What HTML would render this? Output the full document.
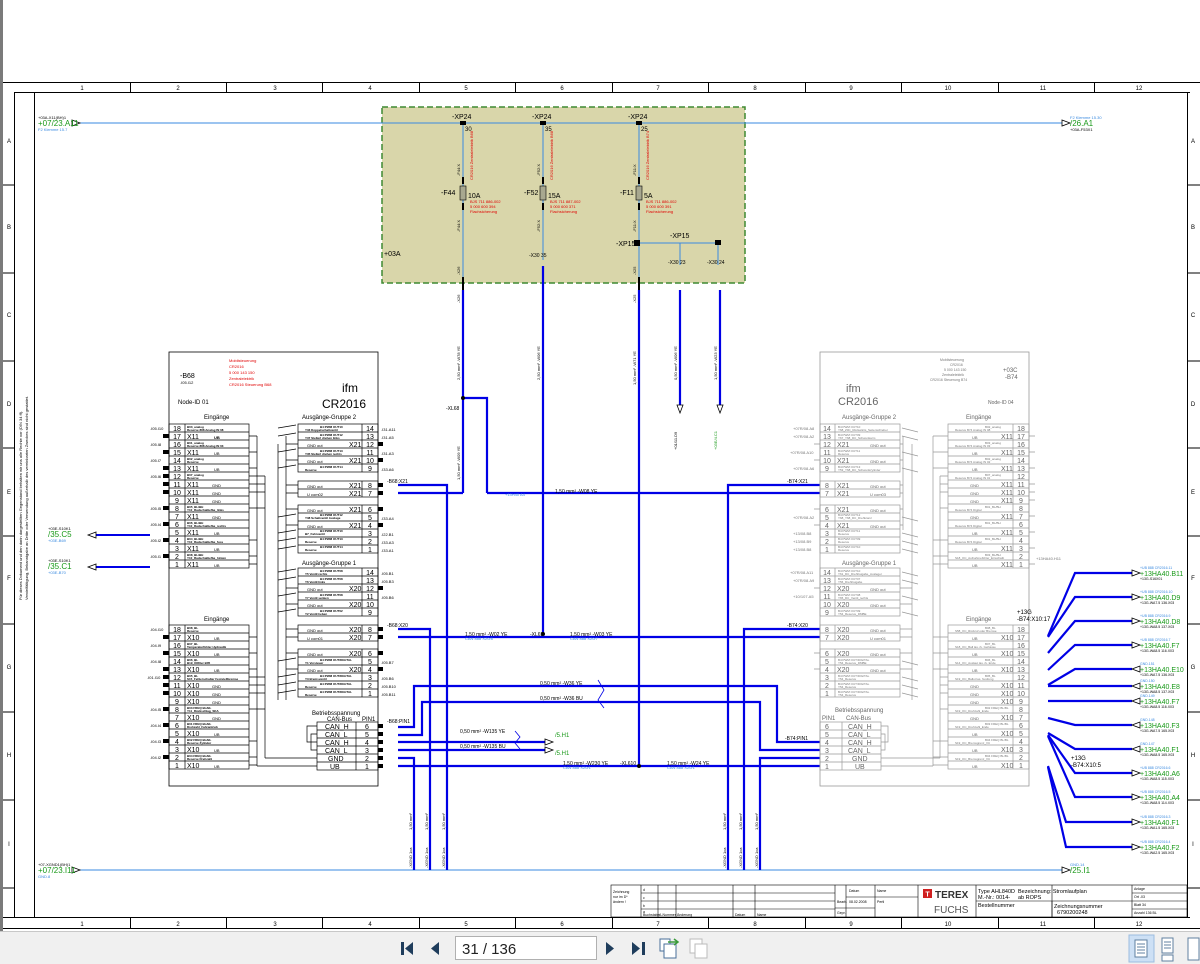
<!DOCTYPE html>
<html><head><meta charset="utf-8">
<style>
html,body{margin:0;padding:0;background:#fff;width:1200px;height:963px;overflow:hidden;font-family:"Liberation Sans",sans-serif}
svg text{font-family:"Liberation Sans",sans-serif}
.k{font-size:7px;fill:#000}
.kg{font-size:7px;fill:#666}
.s{font-size:3px;fill:#000;font-weight:bold}
.sg{font-size:3px;fill:#777}
.r{font-size:4px;fill:#e00000}
.gl{font-size:8px;fill:#1a9a1a}
.bl{font-size:4px;fill:#3a8ae0}
.tiny{font-size:4px;fill:#000}
.tb{position:absolute;left:0;top:931px;width:1200px;height:32px;background:#f0f0f0;border-top:1px solid #c8c8c8}
</style></head><body>
<div style="position:absolute;left:0;top:0;width:3px;height:931px;background:#7a7a7a"></div>
<svg width="1200" height="931" viewBox="0 0 1200 931" style="position:absolute;left:0;top:0">
<!-- frame -->
<g stroke="#000" fill="none" stroke-width="1">
<line x1="3" y1="82.5" x2="1200" y2="82.5"/>
<line x1="14" y1="92.5" x2="1190" y2="92.5"/>
<line x1="14.5" y1="92" x2="14.5" y2="917"/>
<line x1="34.5" y1="92" x2="34.5" y2="917"/>
<line x1="1187.5" y1="92" x2="1187.5" y2="917"/>
<line x1="3" y1="917.5" x2="1190" y2="917.5"/>
<line x1="3" y1="928.5" x2="1200" y2="928.5"/>
<line x1="3" y1="185" x2="14" y2="185"/><line x1="3" y1="273" x2="14" y2="273"/><line x1="3" y1="361" x2="14" y2="361"/><line x1="3" y1="448" x2="14" y2="448"/><line x1="3" y1="536" x2="14" y2="536"/><line x1="3" y1="624" x2="14" y2="624"/><line x1="3" y1="712" x2="14" y2="712"/><line x1="3" y1="800" x2="14" y2="800"/><line x1="3" y1="888" x2="14" y2="888"/>
<line x1="1187" y1="185" x2="1200" y2="185"/><line x1="1187" y1="273" x2="1200" y2="273"/><line x1="1187" y1="361" x2="1200" y2="361"/><line x1="1187" y1="448" x2="1200" y2="448"/><line x1="1187" y1="536" x2="1200" y2="536"/><line x1="1187" y1="624" x2="1200" y2="624"/><line x1="1187" y1="712" x2="1200" y2="712"/><line x1="1187" y1="800" x2="1200" y2="800"/><line x1="1187" y1="888" x2="1200" y2="888"/>
<line x1="130.5" y1="82" x2="130.5" y2="92"/><line x1="226.5" y1="82" x2="226.5" y2="92"/><line x1="322.5" y1="82" x2="322.5" y2="92"/><line x1="419.5" y1="82" x2="419.5" y2="92"/><line x1="515.5" y1="82" x2="515.5" y2="92"/><line x1="612.5" y1="82" x2="612.5" y2="92"/><line x1="708.5" y1="82" x2="708.5" y2="92"/><line x1="805.5" y1="82" x2="805.5" y2="92"/><line x1="901.5" y1="82" x2="901.5" y2="92"/><line x1="998.5" y1="82" x2="998.5" y2="92"/><line x1="1094.5" y1="82" x2="1094.5" y2="92"/>
<line x1="130.5" y1="917" x2="130.5" y2="928"/><line x1="226.5" y1="917" x2="226.5" y2="928"/><line x1="322.5" y1="917" x2="322.5" y2="928"/><line x1="419.5" y1="917" x2="419.5" y2="928"/><line x1="515.5" y1="917" x2="515.5" y2="928"/><line x1="612.5" y1="917" x2="612.5" y2="928"/><line x1="708.5" y1="917" x2="708.5" y2="928"/><line x1="805.5" y1="917" x2="805.5" y2="928"/><line x1="901.5" y1="917" x2="901.5" y2="928"/><line x1="998.5" y1="917" x2="998.5" y2="928"/><line x1="1094.5" y1="917" x2="1094.5" y2="928"/>
</g>
<g class="k" text-anchor="middle" style="font-size:6px">
<text x="82" y="90">1</text><text x="178" y="90">2</text><text x="275" y="90">3</text><text x="370" y="90">4</text><text x="466" y="90">5</text><text x="562" y="90">6</text><text x="658" y="90">7</text><text x="755" y="90">8</text><text x="851" y="90">9</text><text x="948" y="90">10</text><text x="1043" y="90">11</text><text x="1139" y="90">12</text>
<text x="82" y="926">1</text><text x="178" y="926">2</text><text x="275" y="926">3</text><text x="370" y="926">4</text><text x="466" y="926">5</text><text x="562" y="926">6</text><text x="658" y="926">7</text><text x="755" y="926">8</text><text x="851" y="926">9</text><text x="948" y="926">10</text><text x="1043" y="926">11</text><text x="1139" y="926">12</text>
<text x="9" y="143">A</text><text x="9" y="229">B</text><text x="9" y="317">C</text><text x="9" y="406">D</text><text x="9" y="494">E</text><text x="9" y="580">F</text><text x="9" y="669">G</text><text x="9" y="757">H</text><text x="9" y="846">I</text>
<text x="1193" y="143">A</text><text x="1193" y="229">B</text><text x="1193" y="317">C</text><text x="1193" y="406">D</text><text x="1193" y="494">E</text><text x="1193" y="580">F</text><text x="1193" y="669">G</text><text x="1193" y="757">H</text><text x="1193" y="846">I</text>
</g>
<text transform="translate(22,600) rotate(-90)" class="tiny">Für dieses Dokument und den darin dargestellten Gegenstand behalten wir uns alle Rechte vor (DIN 34 ff).</text>
<text transform="translate(28,600) rotate(-90)" class="tiny">Vervielfältigung, Bekanntgabe an Dritte oder Verwendung außerhalb des vereinbarten Zweckes sind nicht gestattet.</text>

<!-- tan box -->
<rect x="382" y="107" width="363" height="176" fill="#d9d6aa" stroke="#3f8a32" stroke-width="1.5" stroke-dasharray="6,3"/>
<text x="384" y="256" class="k">+03A</text>

<!-- thin blue lines -->
<g stroke="#3a8ae0" stroke-width="1" fill="none">
<line x1="80" y1="123" x2="1062" y2="123"/>
<line x1="80" y1="870" x2="1062" y2="870"/>
<line x1="463" y1="123" x2="463" y2="283"/>
<line x1="543" y1="123" x2="543" y2="260"/>
<line x1="639" y1="123" x2="639" y2="283"/>
<polyline points="639,243 718,243 718,265"/>
<line x1="680" y1="243" x2="680" y2="265"/>
</g>
<g stroke="#000" fill="#fff" stroke-width="0.8">
<path d="M72,120 L80,123 L72,126 Z"/><path d="M1062,120 L1070,123 L1062,126 Z"/>
<path d="M72,867 L80,870 L72,873 Z"/><path d="M1062,867 L1070,870 L1062,873 Z"/>
</g>
<text x="38" y="119" class="tiny">+03A-X11(BH)1</text>
<text x="38" y="126" class="gl">+07/23.A11</text>
<text x="38" y="131" class="bl">F2 Klemme 15.7</text>
<text x="1070" y="119" class="bl">F2 Klemme 15.30</text>
<text x="1070" y="126" class="gl">/26.A1</text>
<text x="1070" y="131" class="tiny">+03A-F53X1</text>
<text x="38" y="866" class="tiny">+07-XGND1(BH)1</text>
<text x="38" y="873" class="gl">+07/23.I11</text>
<text x="38" y="878" class="bl">GND.8</text>
<text x="1070" y="866" class="bl">GND.14</text>
<text x="1070" y="873" class="gl">/25.I1</text>

<!-- fuses -->
<g fill="#000">
<rect x="460" y="121" width="6" height="4"/><rect x="540" y="121" width="6" height="4"/><rect x="636" y="121" width="6" height="4"/>
<rect x="634" y="240" width="6" height="6"/><rect x="715" y="240" width="6" height="5"/>
</g>
<g class="k">
<text x="452" y="119">-XP24</text><text x="532" y="119">-XP24</text><text x="628" y="119">-XP24</text>
<text x="465" y="131" style="font-size:6px">30</text><text x="545" y="131" style="font-size:6px">35</text><text x="641" y="131" style="font-size:6px">25</text>
<text x="441" y="195">-F44</text><text x="524" y="195">-F52</text><text x="620" y="195">-F11</text>
<text x="468" y="198">10A</text><text x="548" y="198">15A</text><text x="644" y="198">5A</text>
<text x="616" y="246">-XP15</text><text x="670" y="238">-XP15</text>
<text x="668" y="264" style="font-size:5px">-X30 23</text><text x="707" y="264" style="font-size:5px">-X30 24</text>
<text x="529" y="257" style="font-size:5px">-X30 35</text>
</g>
<g fill="#a8a890" stroke="#000" stroke-width="0.6">
<rect x="460" y="186" width="6" height="14"/><rect x="540" y="186" width="6" height="14"/><rect x="636" y="186" width="6" height="14"/>
</g>
<g stroke="#000" stroke-width="2"><line x1="463" y1="177" x2="463" y2="184"/><line x1="463" y1="203" x2="463" y2="210"/><line x1="543" y1="177" x2="543" y2="184"/><line x1="543" y1="203" x2="543" y2="210"/><line x1="639" y1="177" x2="639" y2="184"/><line x1="639" y1="203" x2="639" y2="210"/><line x1="463" y1="277" x2="463" y2="290"/><line x1="639" y1="277" x2="639" y2="290"/></g>
<g class="r">
<text x="470" y="203">BJS 711 886-002</text><text x="470" y="208">5 000 600 394</text><text x="470" y="213">Flachsicherung</text>
<text x="550" y="203">BJS 711 887-002</text><text x="550" y="208">5 000 600 371</text><text x="550" y="213">Flachsicherung</text>
<text x="646" y="203">BJS 711 886-002</text><text x="646" y="208">5 000 600 391</text><text x="646" y="213">Flachsicherung</text>
<text transform="translate(473,180) rotate(-90)">CR2016 Zentralelektrik B68</text>
<text transform="translate(553,180) rotate(-90)">CR2016 Zentralelektrik B68</text>
<text transform="translate(649,180) rotate(-90)">CR2016 Zentralelektrik B74</text>
</g>
<g class="tiny">
<text transform="translate(460,176) rotate(-90)">-F44:X</text><text transform="translate(540,176) rotate(-90)">-F52:X</text><text transform="translate(636,176) rotate(-90)">-F11:X</text>
<text transform="translate(460,232) rotate(-90)">-F44:X</text><text transform="translate(540,232) rotate(-90)">-F52:X</text><text transform="translate(636,232) rotate(-90)">-F11:X</text>
<text transform="translate(460,275) rotate(-90)">-X26</text><text transform="translate(636,275) rotate(-90)">-X25</text>
<text transform="translate(460,303) rotate(-90)">-X26</text><text transform="translate(636,303) rotate(-90)">-X25</text>
</g>

<!-- thick blue wires -->
<g stroke="#0000e6" stroke-width="2.2" fill="none">
<line x1="463" y1="290" x2="463" y2="493"/>
<polyline points="463,398 487,398 487,493"/>
<line x1="398" y1="493" x2="463" y2="493"/>
<line x1="487" y1="493" x2="820" y2="493"/>
<polyline points="398,485 447,485 447,870"/>
<polyline points="820,485 728,485 728,870"/>
<line x1="543" y1="266" x2="543" y2="634"/>
<line x1="639" y1="290" x2="639" y2="766"/>
<line x1="680" y1="290" x2="680" y2="405"/>
<line x1="720" y1="290" x2="720" y2="405"/>
<polyline points="398,629 430,629 430,870"/>
<line x1="398" y1="637" x2="820" y2="637"/>
<polyline points="820,629 744,629 744,870"/>
<polyline points="398,727 414,727 414,686 777,686 777,742 820,742"/>
<polyline points="398,735 422,735 422,702 760,702 760,750 820,750"/>
<line x1="398" y1="742" x2="545" y2="742"/>
<line x1="398" y1="750" x2="545" y2="750"/>
<polyline points="398,758 414,758 414,870"/>
<line x1="398" y1="766" x2="820" y2="766"/>
<polyline points="820,758 760,758 760,870"/>
</g>
<g fill="#000"><circle cx="463" cy="398" r="2"/><circle cx="543" cy="634" r="2"/><circle cx="639" cy="766" r="2"/></g>
<g stroke="#000" fill="#fff" stroke-width="0.8">
<path d="M677,405 L683,405 L680,413 Z"/><path d="M717,405 L723,405 L720,413 Z"/>
<path d="M545,739 L553,742 L545,745 Z"/><path d="M545,747 L553,750 L545,753 Z"/>
</g>
<g class="k" style="font-size:5px">
<text x="446" y="410">-XL68</text><text x="530" y="636">-XL69</text><text x="620" y="765">-XL610</text>
<text x="555" y="493">1,50 mm²  -W08 YE</text><text x="465" y="636">1,50 mm²  -W02 YE</text><text x="570" y="636">1,50 mm²  -W03 YE</text>
<text x="540" y="685">0,50 mm²  -W36 YE</text><text x="540" y="700">0,50 mm²  -W36 BU</text>
<text x="460" y="733">0,50 mm²  -W135 YE</text><text x="460" y="748">0,50 mm²  -W135 BU</text>
<text x="563" y="765">1,50 mm²  -W230 YE</text><text x="667" y="765">1,50 mm²  -W24 YE</text>
<text x="387" y="483">-B68:X21</text><text x="387" y="627">-B68:X20</text><text x="387" y="723">-B68:PIN1</text>
<text x="787" y="483">-B74:X21</text><text x="787" y="627">-B74:X20</text><text x="785" y="740">-B74:PIN1</text>
</g>
<g class="gl" style="font-size:6px"><text x="555" y="737">/5.H1</text><text x="555" y="755">/5.H1</text></g>
<g class="bl"><text x="505" y="496">+13H40 A4</text><text x="465" y="640">CAN 888 X20/8</text><text x="570" y="640">CAN 888 X20/7</text><text x="563" y="769">CAN 888 X20/1</text><text x="667" y="769">CAN 888 X20/1</text></g>
<polyline points="515,731 520,737 515,743 520,749" stroke="#0000e6" fill="none" stroke-width="0.8"/>
<polyline points="598,680 604,690 598,700 604,708" stroke="#0000e6" fill="none" stroke-width="0.8"/>
<g class="tiny">
<text transform="translate(460,380) rotate(-90)">2,50 mm²  -W78 YE</text>
<text transform="translate(540,380) rotate(-90)">2,50 mm²  -W06 YE</text>
<text transform="translate(636,385) rotate(-90)">1,50 mm²  -W71 YE</text>
<text transform="translate(460,480) rotate(-90)">1,50 mm²  -W09 YE</text>
<text transform="translate(677,380) rotate(-90)">0,50 mm² -W06 YE</text>
<text transform="translate(717,380) rotate(-90)">1,50 mm² -W23 YE</text>
<text transform="translate(412,830) rotate(-90)">1,50 mm²</text><text transform="translate(428,830) rotate(-90)">1,50 mm²</text><text transform="translate(445,830) rotate(-90)">1,50 mm²</text>
<text transform="translate(726,830) rotate(-90)">1,50 mm²</text><text transform="translate(742,830) rotate(-90)">1,50 mm²</text><text transform="translate(758,830) rotate(-90)">1,50 mm²</text>
<text transform="translate(412,868) rotate(-90)">-XGND 1ca</text><text transform="translate(428,868) rotate(-90)">-XGND 1ca</text><text transform="translate(445,868) rotate(-90)">-XGND 1ca</text>
<text transform="translate(726,868) rotate(-90)">-XGND 1ca</text><text transform="translate(742,868) rotate(-90)">-XGND 1ca</text><text transform="translate(758,868) rotate(-90)">-XGND 1ca</text>
<text transform="translate(677,450) rotate(-90)">+01/11.D9</text><text transform="translate(717,450) rotate(-90)" style="fill:#1a9a1a">+03E/4.C1</text>
</g>

<!-- LEFT MODULE B68 -->
<rect x="169" y="352" width="209" height="434" fill="none" stroke="#000" stroke-width="0.8"/>
<text x="180" y="378" class="k">-B68</text><text x="180" y="384" class="tiny">.I05.I12</text>
<text x="178" y="404" class="k" style="font-size:6px">Node-ID 01</text>
<text x="342" y="392" class="k" style="font-size:12px">ifm</text>
<text x="322" y="408" class="k" style="font-size:12px">CR2016</text>
<g class="r"><text x="229" y="362">Mobilsteuerung</text><text x="229" y="368">CR2016</text><text x="229" y="374">5 000 143 150</text><text x="229" y="380">Zentralelektrik</text><text x="229" y="386">CR2016 Steuerung B68</text></g>
<text x="204" y="419" class="k" style="font-size:6px">Eingänge</text>
<text x="302" y="419" class="k" style="font-size:6px">Ausgänge-Gruppe 2</text>
<text x="302" y="565" class="k" style="font-size:6px">Ausgänge-Gruppe 1</text>
<text x="204" y="621" class="k" style="font-size:6px">Eingänge</text>
<text x="312" y="715" class="k" style="font-size:6px">Betriebsspannung</text>
<text x="327" y="721" class="k" style="font-size:6px">CAN-Bus</text><text x="362" y="721" class="k" style="font-size:6px">PIN1</text>

<g fill="none" stroke="#000" stroke-width="0.7">
<!-- left upper table rows -->
<rect x="169" y="424" width="80" height="144"/><line x1="185" y1="424" x2="185" y2="568"/>
<path d="M169,432H249M169,440H249M169,448H249M169,456H249M169,464H249M169,472H249M169,480H249M169,488H249M169,496H249M169,504H249M169,512H249M169,520H249M169,528H249M169,536H249M169,544H249M169,552H249M169,560H249"/>
<rect x="169" y="625" width="80" height="144"/><line x1="185" y1="625" x2="185" y2="769"/>
<path d="M169,633H249M169,641H249M169,649H249M169,657H249M169,665H249M169,673H249M169,681H249M169,689H249M169,697H249M169,705H249M169,713H249M169,721H249M169,729H249M169,737H249M169,745H249M169,753H249M169,761H249"/>
<!-- right tables -->
<rect x="298" y="424" width="80" height="48"/><line x1="362" y1="424" x2="362" y2="472"/><path d="M298,432H378M298,440H378M298,448H378M298,456H378M298,464H378"/>
<rect x="298" y="481" width="80" height="16"/><line x1="362" y1="481" x2="362" y2="497"/><path d="M298,489H378"/>
<rect x="298" y="505" width="80" height="48"/><line x1="362" y1="505" x2="362" y2="553"/><path d="M298,513H378M298,521H378M298,529H378M298,537H378M298,545H378"/>
<rect x="298" y="568" width="80" height="48"/><line x1="362" y1="568" x2="362" y2="616"/><path d="M298,576H378M298,584H378M298,592H378M298,600H378M298,608H378"/>
<rect x="298" y="625" width="80" height="16"/><line x1="362" y1="625" x2="362" y2="641"/><path d="M298,633H378"/>
<rect x="298" y="649" width="80" height="48"/><line x1="362" y1="649" x2="362" y2="697"/><path d="M298,657H378M298,665H378M298,673H378M298,681H378M298,689H378"/>
<rect x="317" y="722" width="61" height="48"/><line x1="356" y1="722" x2="356" y2="770"/><path d="M317,730H378M317,738H378M317,746H378M317,754H378M317,762H378"/>
<polyline points="317,726 307,726 307,742 317,742"/><polyline points="317,734 311,734 311,750 317,750"/>
<!-- buses -->
<line x1="257" y1="436" x2="257" y2="766"/><line x1="265" y1="476" x2="265" y2="758"/>
<path d="M249,436H257M249,452H257M249,468H257M249,540H257M249,556H257M249,564H257M249,637H257M249,653H257M249,669H257M249,741H257M249,757H257M249,765H257"/>
<path d="M249,476H265M249,484H265M249,492H265M249,508H265M249,677H265M249,685H265M249,693H265M249,709H265"/>
<line x1="257" y1="766" x2="317" y2="766"/><line x1="265" y1="758" x2="317" y2="758"/>
<line x1="286" y1="436" x2="286" y2="700"/><line x1="278" y1="444" x2="278" y2="700"/>
<path d="M286,444H298M286,460H298M286,485H298M286,493H298M286,509H298M286,525H298M286,588H298M286,604H298M286,629H298M286,637H298M286,653H298M286,669H298"/>
<path d="M278,428L296,425M278,436L296,433M278,452L296,449M278,468L296,465M278,517L296,514M278,533L296,530M278,541L296,538M278,549L296,546M278,572L296,569M278,580L296,577M278,596L296,593M278,612L296,609M278,661L296,658M278,677L296,674M278,685L296,682M278,693L296,690"/>
</g>
<g fill="#000">
<rect x="163" y="434" width="6" height="4"/><rect x="163" y="450" width="6" height="4"/><rect x="163" y="466" width="6" height="4"/><rect x="163" y="474" width="6" height="4"/><rect x="163" y="482" width="6" height="4"/><rect x="163" y="490" width="6" height="4"/><rect x="163" y="506" width="6" height="4"/><rect x="163" y="522" width="6" height="4"/><rect x="163" y="538" width="6" height="4"/><rect x="163" y="554" width="6" height="4"/>
<rect x="163" y="635" width="6" height="4"/><rect x="163" y="651" width="6" height="4"/><rect x="163" y="667" width="6" height="4"/><rect x="163" y="675" width="6" height="4"/><rect x="163" y="683" width="6" height="4"/><rect x="163" y="691" width="6" height="4"/><rect x="163" y="707" width="6" height="4"/><rect x="163" y="723" width="6" height="4"/><rect x="163" y="739" width="6" height="4"/><rect x="163" y="755" width="6" height="4"/>
<rect x="378" y="442" width="5" height="4"/><rect x="378" y="458" width="5" height="4"/><rect x="378" y="483" width="5" height="4"/><rect x="378" y="491" width="5" height="4"/><rect x="378" y="507" width="5" height="4"/><rect x="378" y="523" width="5" height="4"/><rect x="378" y="586" width="5" height="4"/><rect x="378" y="627" width="5" height="4"/><rect x="378" y="635" width="5" height="4"/><rect x="378" y="651" width="5" height="4"/><rect x="378" y="667" width="5" height="4"/>
<rect x="378" y="724" width="5" height="4"/><rect x="378" y="732" width="5" height="4"/><rect x="378" y="740" width="5" height="4"/><rect x="378" y="748" width="5" height="4"/><rect x="378" y="756" width="5" height="4"/><rect x="378" y="764" width="5" height="4"/>
</g>
<!-- left numbers -->
<g class="k" text-anchor="middle">
<text x="177" y="431">18</text><text x="177" y="439">17</text><text x="177" y="447">16</text><text x="177" y="455">15</text><text x="177" y="463">14</text><text x="177" y="471">13</text><text x="177" y="479">12</text><text x="177" y="487">11</text><text x="177" y="495">10</text><text x="177" y="503">9</text><text x="177" y="511">8</text><text x="177" y="519">7</text><text x="177" y="527">6</text><text x="177" y="535">5</text><text x="177" y="543">4</text><text x="177" y="551">3</text><text x="177" y="559">2</text><text x="177" y="567">1</text>
<text x="177" y="632">18</text><text x="177" y="640">17</text><text x="177" y="648">16</text><text x="177" y="656">15</text><text x="177" y="664">14</text><text x="177" y="672">13</text><text x="177" y="680">12</text><text x="177" y="688">11</text><text x="177" y="696">10</text><text x="177" y="704">9</text><text x="177" y="712">8</text><text x="177" y="720">7</text><text x="177" y="728">6</text><text x="177" y="736">5</text><text x="177" y="744">4</text><text x="177" y="752">3</text><text x="177" y="760">2</text><text x="177" y="768">1</text>
<text x="370" y="431">14</text><text x="370" y="439">13</text><text x="370" y="447">12</text><text x="370" y="455">11</text><text x="370" y="463">10</text><text x="370" y="471">9</text><text x="370" y="488">8</text><text x="370" y="496">7</text><text x="370" y="512">6</text><text x="370" y="520">5</text><text x="370" y="528">4</text><text x="370" y="536">3</text><text x="370" y="544">2</text><text x="370" y="552">1</text>
<text x="370" y="575">14</text><text x="370" y="583">13</text><text x="370" y="591">12</text><text x="370" y="599">11</text><text x="370" y="607">10</text><text x="370" y="615">9</text><text x="370" y="632">8</text><text x="370" y="640">7</text><text x="370" y="656">6</text><text x="370" y="664">5</text><text x="370" y="672">4</text><text x="370" y="680">3</text><text x="370" y="688">2</text><text x="370" y="696">1</text>
<text x="367" y="729">6</text><text x="367" y="737">5</text><text x="367" y="745">4</text><text x="367" y="753">3</text><text x="367" y="761">2</text><text x="367" y="769">1</text>
</g>
<g class="k">
<text x="187" y="439">X11</text><text x="214" y="439" class="s" style="font-size:4px">UB</text>
<text x="187" y="455">X11</text><text x="214" y="455" style="font-size:4px">UB</text>
<text x="187" y="471">X11</text><text x="214" y="471" style="font-size:4px">UB</text>
<text x="187" y="487">X11</text><text x="212" y="487" style="font-size:4px">GND</text>
<text x="187" y="495">X11</text><text x="212" y="495" style="font-size:4px">GND</text>
<text x="187" y="503">X11</text><text x="212" y="503" style="font-size:4px">GND</text>
<text x="187" y="519">X11</text><text x="212" y="519" style="font-size:4px">GND</text>
<text x="187" y="535">X11</text><text x="214" y="535" style="font-size:4px">UB</text>
<text x="187" y="551">X11</text><text x="214" y="551" style="font-size:4px">UB</text>
<text x="187" y="567">X11</text><text x="214" y="567" style="font-size:4px">UB</text>
<text x="187" y="640">X10</text><text x="214" y="640" style="font-size:4px">UB</text>
<text x="187" y="656">X10</text><text x="214" y="656" style="font-size:4px">UB</text>
<text x="187" y="672">X10</text><text x="214" y="672" style="font-size:4px">UB</text>
<text x="187" y="688">X10</text><text x="212" y="688" style="font-size:4px">GND</text>
<text x="187" y="696">X10</text><text x="212" y="696" style="font-size:4px">GND</text>
<text x="187" y="704">X10</text><text x="212" y="704" style="font-size:4px">GND</text>
<text x="187" y="720">X10</text><text x="212" y="720" style="font-size:4px">GND</text>
<text x="187" y="736">X10</text><text x="214" y="736" style="font-size:4px">UB</text>
<text x="187" y="752">X10</text><text x="214" y="752" style="font-size:4px">UB</text>
<text x="187" y="768">X10</text><text x="214" y="768" style="font-size:4px">UB</text>
<text x="349" y="447">X21</text><text x="307" y="447" style="font-size:4px">GND out</text>
<text x="349" y="463">X21</text><text x="307" y="463" style="font-size:4px">GND out</text>
<text x="349" y="488">X21</text><text x="307" y="488" style="font-size:4px">GND out</text>
<text x="349" y="496">X21</text><text x="307" y="496" style="font-size:4px">U com02</text>
<text x="349" y="512">X21</text><text x="307" y="512" style="font-size:4px">GND out</text>
<text x="349" y="528">X21</text><text x="307" y="528" style="font-size:4px">GND out</text>
<text x="349" y="591">X20</text><text x="307" y="591" style="font-size:4px">GND out</text>
<text x="349" y="607">X20</text><text x="307" y="607" style="font-size:4px">GND out</text>
<text x="349" y="632">X20</text><text x="307" y="632" style="font-size:4px">GND out</text>
<text x="349" y="640">X20</text><text x="307" y="640" style="font-size:4px">U com01</text>
<text x="349" y="656">X20</text><text x="307" y="656" style="font-size:4px">GND out</text>
<text x="349" y="672">X20</text><text x="307" y="672" style="font-size:4px">GND out</text>
<text x="325" y="729">CAN_H</text><text x="325" y="737">CAN_L</text><text x="325" y="745">CAN_H</text><text x="325" y="753">CAN_L</text><text x="328" y="761">GND</text><text x="330" y="769">UB</text>
</g>
<g class="s">
<text x="187" y="428">B03_analog</text><text x="187" y="431">Reserve 888 Analog IN 08</text>
<text x="187" y="444">B01_analog</text><text x="187" y="447">Reserve 888 Analog IN 03</text>
<text x="187" y="460">B02_analog</text><text x="187" y="463">Reserve</text>
<text x="187" y="476">B07_analog</text><text x="187" y="479">Reserve</text>
<text x="187" y="508">B05_BL/BH</text><text x="187" y="511">Y10_Radschaltiefbe_links</text>
<text x="187" y="524">B06_BL/BH</text><text x="187" y="527">Y10_Radschaltiefbe_rechts</text>
<text x="187" y="540">B04_BL/BH</text><text x="187" y="543">Y10_Radschaltiefbe_fuss</text>
<text x="187" y="556">B08_BL/BH</text><text x="187" y="559">Y10_Radschaltiefbe_hinten</text>
<text x="187" y="629">B08_BL</text><text x="187" y="632">Reserve</text>
<text x="187" y="645">B07_BL</text><text x="187" y="648">Temperaturfühler Hydraulik</text>
<text x="187" y="661">B06_BL</text><text x="187" y="664">B19_Ölfilter B05</text>
<text x="187" y="677">B05_BL</text><text x="187" y="680">S15_Fehlerschalter Feststellbremse</text>
<text x="187" y="709">B03 FREQ BL/BL</text><text x="187" y="712">Y11_Rückschlag_SKA</text>
<text x="187" y="725">B01 FREQ BL/BL</text><text x="187" y="728">Drehzahl_Fahrantrieb</text>
<text x="187" y="741">B02 FREQ BL/BL</text><text x="187" y="744">Reserve Zylinder</text>
<text x="187" y="757">B04 FREQ BL/BL</text><text x="187" y="760">Reserve Drehzahl</text>
<text x="320" y="428">B4:PWM OUT10</text><text x="305" y="431">Y33 Doppelschaltventil</text>
<text x="320" y="436">B4:PWM OUT12</text><text x="305" y="439">Y37 Stellerl drehen links</text>
<text x="320" y="452">B4:PWM OUT13</text><text x="305" y="455">Y35 Stellerl drehen rechts</text>
<text x="320" y="468">B4:PWM OUT14</text><text x="305" y="471">Reserve</text>
<text x="320" y="516">B4:PWM OUT12</text><text x="305" y="519">Y38 Schaltventil Auslage</text>
<text x="320" y="532">B4:PWM OUT10</text><text x="305" y="535">B7_Fahrventil</text>
<text x="320" y="540">B4:PWM OUT13</text><text x="305" y="543">Reserve</text>
<text x="320" y="548">B4:PWM OUT14</text><text x="305" y="551">Reserve</text>
<text x="320" y="572">B4:PWM OUT08</text><text x="305" y="575">Y5 Ventil rechts</text>
<text x="320" y="580">B4:PWM OUT08</text><text x="305" y="583">Y6 Ventil links</text>
<text x="320" y="596">B4:PWM OUT08</text><text x="305" y="599">Y7 Ventil senken</text>
<text x="320" y="612">B4:PWM OUT02</text><text x="305" y="615">Y2 Ventil heben</text>
<text x="320" y="661">B4:PWM OUT/DIGITAL</text><text x="305" y="664">Y1 Vorsteuer</text>
<text x="320" y="677">B4:PWM OUT/DIGITAL</text><text x="305" y="680">Y3 Bremsventil</text>
<text x="320" y="685">B4:PWM OUT/DIGITAL</text><text x="305" y="688">Reserve</text>
<text x="320" y="693">B4:PWM OUT/DIGITAL</text><text x="305" y="696">Reserve</text>
</g>
<g class="tiny">
<text x="150" y="430">.I05.I10</text><text x="150" y="446">.I05.I8</text><text x="150" y="462">.I05.I7</text><text x="150" y="478">.I05.I6</text><text x="150" y="510">.I05.I5</text><text x="150" y="526">.I05.I4</text><text x="150" y="542">.I05.I2</text><text x="150" y="558">.I05.I1</text>
<text x="150" y="631">.I04.I10</text><text x="150" y="647">.I04.I9</text><text x="150" y="663">.I04.I8</text><text x="147" y="679">.I01.I10</text><text x="150" y="711">.I04.I5</text><text x="150" y="727">.I04.I4</text><text x="150" y="743">.I04.I3</text><text x="150" y="759">.I04.I2</text>
<text x="381" y="431">.I31.A11</text><text x="381" y="439">.I31.A5</text><text x="381" y="455">.I31.A3</text><text x="381" y="471">.I33.A6</text><text x="381" y="520">.I33.A4</text><text x="381" y="536">.I22.B1</text><text x="381" y="544">.I33.A3</text><text x="381" y="552">.I33.A1</text>
<text x="381" y="575">.I05.B1</text><text x="381" y="583">.I05.B3</text><text x="381" y="599">.I05.B6</text><text x="381" y="664">.I05.B7</text><text x="381" y="680">.I05.B6</text><text x="381" y="688">.I05.B10</text><text x="381" y="696">.I05.B11</text>
</g>
<!-- left external arrows -->
<g stroke="#0000e6" stroke-width="2" fill="none"><line x1="96" y1="535" x2="150" y2="535"/><line x1="96" y1="567" x2="150" y2="567"/></g>
<g stroke="#000" fill="#fff" stroke-width="0.8"><path d="M96,532 L88,535 L96,538 Z"/><path d="M96,564 L88,567 L96,570 Z"/></g>
<text x="48" y="530" class="tiny">+03E-S10K1</text><text x="48" y="537" class="gl">/35.C5</text><text x="48" y="542" class="bl">+03E-B69</text>
<text x="48" y="562" class="tiny">+03E-S10K1</text><text x="48" y="569" class="gl">/35.C1</text><text x="48" y="574" class="bl">+03E-B70</text>

<!-- RIGHT MODULE B74 (gray) -->
<rect x="820" y="352" width="209" height="434" fill="none" stroke="#999" stroke-width="0.8"/>
<text x="846" y="392" class="kg" style="font-size:11px">ifm</text>
<text x="838" y="405" class="kg" style="font-size:11px">CR2016</text>
<g class="sg" style="font-size:3.5px"><text x="940" y="361">Mobilsteuerung</text><text x="950" y="366">CR2016</text><text x="944" y="371">5 000 143 150</text><text x="942" y="376">Zentralelektrik</text><text x="930" y="381">CR2016 Steuerung B74</text></g>
<text x="1003" y="372" class="kg" style="font-size:6px">+03C</text><text x="1005" y="379" class="kg" style="font-size:6px">-B74</text>
<text x="988" y="404" class="kg" style="font-size:5px">Node-ID 04</text>
<text x="842" y="419" class="kg" style="font-size:6px">Ausgänge-Gruppe 2</text>
<text x="966" y="419" class="kg" style="font-size:6px">Eingänge</text>
<text x="842" y="565" class="kg" style="font-size:6px">Ausgänge-Gruppe 1</text>
<text x="966" y="621" class="kg" style="font-size:6px">Eingänge</text>
<text x="835" y="712" class="kg" style="font-size:6px">Betriebsspannung</text>
<text x="822" y="720" class="kg" style="font-size:6px">PIN1</text><text x="846" y="720" class="kg" style="font-size:6px">CAN-Bus</text>
<g fill="none" stroke="#999" stroke-width="0.7">
<rect x="820" y="424" width="80" height="48"/><line x1="835" y1="424" x2="835" y2="472"/><path d="M820,432H900M820,440H900M820,448H900M820,456H900M820,464H900"/>
<rect x="820" y="481" width="80" height="16"/><line x1="835" y1="481" x2="835" y2="497"/><path d="M820,489H900"/>
<rect x="820" y="505" width="80" height="48"/><line x1="835" y1="505" x2="835" y2="553"/><path d="M820,513H900M820,521H900M820,529H900M820,537H900M820,545H900"/>
<rect x="820" y="568" width="80" height="48"/><line x1="835" y1="568" x2="835" y2="616"/><path d="M820,576H900M820,584H900M820,592H900M820,600H900M820,608H900"/>
<rect x="820" y="625" width="80" height="16"/><line x1="835" y1="625" x2="835" y2="641"/><path d="M820,633H900"/>
<rect x="820" y="649" width="80" height="48"/><line x1="835" y1="649" x2="835" y2="697"/><path d="M820,657H900M820,665H900M820,673H900M820,681H900M820,689H900"/>
<rect x="820" y="722" width="61" height="48"/><line x1="842" y1="722" x2="842" y2="770"/><path d="M820,730H881M820,738H881M820,746H881M820,754H881M820,762H881"/>
<polyline points="881,726 888,726 888,742 881,742"/><polyline points="881,734 885,734 885,750 881,750"/>
<rect x="948" y="424" width="81" height="144"/><line x1="1013" y1="424" x2="1013" y2="568"/>
<path d="M948,432H1029M948,440H1029M948,448H1029M948,456H1029M948,464H1029M948,472H1029M948,480H1029M948,488H1029M948,496H1029M948,504H1029M948,512H1029M948,520H1029M948,528H1029M948,536H1029M948,544H1029M948,552H1029M948,560H1029"/>
<rect x="948" y="625" width="81" height="144"/><line x1="1013" y1="625" x2="1013" y2="769"/>
<path d="M948,633H1029M948,641H1029M948,649H1029M948,657H1029M948,665H1029M948,673H1029M948,681H1029M948,689H1029M948,697H1029M948,705H1029M948,713H1029M948,721H1029M948,729H1029M948,737H1029M948,745H1029M948,753H1029M948,761H1029"/>
<line x1="903" y1="436" x2="903" y2="530"/><line x1="912" y1="444" x2="912" y2="700"/>
<path d="M900,444H903M900,460H903M900,485H903M900,493H903M900,509H903M900,525H903M900,588H912M900,604H912M900,629H912M900,637H912M900,653H912M900,669H912"/>
<path d="M902,428L918,432M902,436L918,440M902,452L918,456M902,468L918,472M902,517L918,521M902,533L918,537M902,541L918,545M902,549L918,553M902,572L918,576M902,580L918,584M902,596L918,600M902,612L918,616M902,661L918,665M902,677L918,681M902,685L918,689M902,693L918,697"/>
<line x1="933" y1="436" x2="933" y2="766"/><line x1="940" y1="476" x2="940" y2="758"/>
<path d="M933,436H948M933,452H948M933,468H948M933,540H948M933,556H948M933,564H948M933,637H948M933,653H948M933,669H948M933,741H948M933,757H948M933,765H948"/>
<path d="M940,476H948M940,484H948M940,492H948M940,508H948M940,677H948M940,685H948M940,693H948M940,709H948"/>
<line x1="881" y1="766" x2="933" y2="766"/><line x1="881" y1="758" x2="940" y2="758"/>
<path d="M1029,436h6M1029,452h6M1029,468h6M1029,484h6M1029,492h6M1029,500h6M1029,516h6M1029,532h6M1029,548h6M1029,564h6"/>
<path d="M814,444h6M814,460h6M814,509h6M814,525h6M814,588h6M814,653h6M814,669h6"/>
</g>
<g class="kg" text-anchor="middle">
<text x="827" y="431">14</text><text x="827" y="439">13</text><text x="827" y="447">12</text><text x="827" y="455">11</text><text x="827" y="463">10</text><text x="827" y="471">9</text><text x="827" y="488">8</text><text x="827" y="496">7</text><text x="827" y="512">6</text><text x="827" y="520">5</text><text x="827" y="528">4</text><text x="827" y="536">3</text><text x="827" y="544">2</text><text x="827" y="552">1</text>
<text x="827" y="575">14</text><text x="827" y="583">13</text><text x="827" y="591">12</text><text x="827" y="599">11</text><text x="827" y="607">10</text><text x="827" y="615">9</text><text x="827" y="632">8</text><text x="827" y="640">7</text><text x="827" y="656">6</text><text x="827" y="664">5</text><text x="827" y="672">4</text><text x="827" y="680">3</text><text x="827" y="688">2</text><text x="827" y="696">1</text>
<text x="827" y="729">6</text><text x="827" y="737">5</text><text x="827" y="745">4</text><text x="827" y="753">3</text><text x="827" y="761">2</text><text x="827" y="769">1</text>
<text x="1021" y="431">18</text><text x="1021" y="439">17</text><text x="1021" y="447">16</text><text x="1021" y="455">15</text><text x="1021" y="463">14</text><text x="1021" y="471">13</text><text x="1021" y="479">12</text><text x="1021" y="487">11</text><text x="1021" y="495">10</text><text x="1021" y="503">9</text><text x="1021" y="511">8</text><text x="1021" y="519">7</text><text x="1021" y="527">6</text><text x="1021" y="535">5</text><text x="1021" y="543">4</text><text x="1021" y="551">3</text><text x="1021" y="559">2</text><text x="1021" y="567">1</text>
<text x="1021" y="632">18</text><text x="1021" y="640">17</text><text x="1021" y="648">16</text><text x="1021" y="656">15</text><text x="1021" y="664">14</text><text x="1021" y="672">13</text><text x="1021" y="680">12</text><text x="1021" y="688">11</text><text x="1021" y="696">10</text><text x="1021" y="704">9</text><text x="1021" y="712">8</text><text x="1021" y="720">7</text><text x="1021" y="728">6</text><text x="1021" y="736">5</text><text x="1021" y="744">4</text><text x="1021" y="752">3</text><text x="1021" y="760">2</text><text x="1021" y="768">1</text>
</g>
<g class="kg">
<text x="837" y="447">X21</text><text x="870" y="447" style="font-size:4px">GND out</text>
<text x="837" y="463">X21</text><text x="870" y="463" style="font-size:4px">GND out</text>
<text x="837" y="488">X21</text><text x="870" y="488" style="font-size:4px">GND out</text>
<text x="837" y="496">X21</text><text x="870" y="496" style="font-size:4px">U com03</text>
<text x="837" y="512">X21</text><text x="870" y="512" style="font-size:4px">GND out</text>
<text x="837" y="528">X21</text><text x="870" y="528" style="font-size:4px">GND out</text>
<text x="837" y="591">X20</text><text x="870" y="591" style="font-size:4px">GND out</text>
<text x="837" y="607">X20</text><text x="870" y="607" style="font-size:4px">GND out</text>
<text x="837" y="632">X20</text><text x="870" y="632" style="font-size:4px">GND out</text>
<text x="837" y="640">X20</text><text x="870" y="640" style="font-size:4px">U com01</text>
<text x="837" y="656">X20</text><text x="870" y="656" style="font-size:4px">GND out</text>
<text x="837" y="672">X20</text><text x="870" y="672" style="font-size:4px">GND out</text>
<text x="848" y="729">CAN_H</text><text x="848" y="737">CAN_L</text><text x="848" y="745">CAN_H</text><text x="848" y="753">CAN_L</text><text x="852" y="761">GND</text><text x="855" y="769">UB</text>
<text x="1001" y="439">X11</text><text x="972" y="439" style="font-size:4px">UB</text>
<text x="1001" y="455">X11</text><text x="972" y="455" style="font-size:4px">UB</text>
<text x="1001" y="471">X11</text><text x="972" y="471" style="font-size:4px">UB</text>
<text x="1001" y="487">X11</text><text x="970" y="487" style="font-size:4px">GND</text>
<text x="1001" y="495">X11</text><text x="970" y="495" style="font-size:4px">GND</text>
<text x="1001" y="503">X11</text><text x="970" y="503" style="font-size:4px">GND</text>
<text x="1001" y="519">X11</text><text x="970" y="519" style="font-size:4px">GND</text>
<text x="1001" y="535">X11</text><text x="972" y="535" style="font-size:4px">UB</text>
<text x="1001" y="551">X11</text><text x="972" y="551" style="font-size:4px">UB</text>
<text x="1001" y="567">X11</text><text x="972" y="567" style="font-size:4px">UB</text>
<text x="1001" y="640">X10</text><text x="972" y="640" style="font-size:4px">UB</text>
<text x="1001" y="656">X10</text><text x="972" y="656" style="font-size:4px">UB</text>
<text x="1001" y="672">X10</text><text x="972" y="672" style="font-size:4px">UB</text>
<text x="1001" y="688">X10</text><text x="970" y="688" style="font-size:4px">GND</text>
<text x="1001" y="696">X10</text><text x="970" y="696" style="font-size:4px">GND</text>
<text x="1001" y="704">X10</text><text x="970" y="704" style="font-size:4px">GND</text>
<text x="1001" y="720">X10</text><text x="970" y="720" style="font-size:4px">GND</text>
<text x="1001" y="736">X10</text><text x="972" y="736" style="font-size:4px">UB</text>
<text x="1001" y="752">X10</text><text x="972" y="752" style="font-size:4px">UB</text>
<text x="1001" y="768">X10</text><text x="972" y="768" style="font-size:4px">UB</text>
</g>
<g class="sg">
<text x="838" y="428">B4:PWM OUT10</text><text x="838" y="431">Y68_Z0C_Rückwärts_Seitenschieber</text>
<text x="838" y="436">B4:PWM OUT09</text><text x="838" y="439">Y67_Y68_DC_Schwenkarm</text>
<text x="838" y="452">B4:PWM OUT11</text><text x="838" y="455">Reserve</text>
<text x="838" y="468">B4:PWM OUT13</text><text x="838" y="471">Y53_Y68_DC_Schwenkzylinder</text>
<text x="838" y="516">B4:PWM OUT12</text><text x="838" y="519">Y68_Y68_DC_Drehkranz</text>
<text x="838" y="532">B4:PWM OUT11</text><text x="838" y="535">Reserve</text>
<text x="838" y="540">B4:PWM OUT09</text><text x="838" y="543">Reserve</text>
<text x="838" y="548">B4:PWM OUT10</text><text x="838" y="551">Reserve</text>
<text x="838" y="572">B4:PWM OUT10</text><text x="838" y="575">Y61_DC_Drehfreigabe_Ausleger</text>
<text x="838" y="580">B4:PWM OUT07</text><text x="838" y="583">Y56_Drehfreigabe</text>
<text x="838" y="596">B4:PWM OUT08</text><text x="838" y="599">Y65_DC_Ventil_rechts</text>
<text x="838" y="612">B4:PWM OUT09</text><text x="838" y="615">Y54_Reserve_DMBE</text>
<text x="838" y="661">B4:PWM OUT/DIGITAL</text><text x="838" y="664">Y54_Reserve_DMBE</text>
<text x="838" y="677">B4:PWM OUT/DIGITAL</text><text x="838" y="680">Y54_Reserve</text>
<text x="838" y="685">B4:PWM OUT/DIGITAL</text><text x="838" y="688">Y54_Reserve</text>
<text x="838" y="693">B4:PWM OUT/DIGITAL</text><text x="838" y="696">Y54_Reserve</text>
<text x="985" y="428">B02_analog</text><text x="955" y="431">Reserve B74 Analog IN 08</text>
<text x="985" y="444">B03_analog</text><text x="955" y="447">Reserve B74 Analog IN 03</text>
<text x="985" y="460">B02_analog</text><text x="955" y="463">Reserve B74 Analog IN 02</text>
<text x="985" y="476">B07_analog</text><text x="955" y="479">Reserve B74 Analog IN 01</text>
<text x="985" y="508">B01_BL/BH</text><text x="955" y="511">Reserve B74 Digital</text>
<text x="985" y="524">B01_BL/BH</text><text x="955" y="527">Reserve B74 Digital</text>
<text x="985" y="540">B01_BL/BH</text><text x="955" y="543">Reserve B74 Digital</text>
<text x="985" y="556">B03_BL/BH</text><text x="955" y="559">S18_OC_Aufnahmefühler_Einschaltt</text>
<text x="985" y="629">B08_BL</text><text x="955" y="632">S58_OC_Rückruf oder Bremse</text>
<text x="985" y="645">B07_BL</text><text x="955" y="648">S18_OC_Ball las. rk. Gehäuse</text>
<text x="985" y="661">B06_BL</text><text x="955" y="664">S14_OC_Auslaut las. rk. Ende</text>
<text x="985" y="677">B05_BL</text><text x="955" y="680">S19_OC_Ballut las. hustlung</text>
<text x="985" y="709">B02 FREQ BL/BL</text><text x="955" y="712">S19_OC_Drehzahl_Ende</text>
<text x="985" y="725">B03 FREQ BL/BL</text><text x="955" y="728">S19_OC_Drehzahl_Ende</text>
<text x="985" y="741">B04 FREQ BL/BL</text><text x="955" y="744">S19_OC_Bremsgrenz_VC</text>
<text x="985" y="757">B04 FREQ BL/BL</text><text x="955" y="760">S19_OC_Bremsgrenz_VC</text>
</g>
<g class="sg" style="font-size:4px">
<text x="793" y="430">+07R/08.A8</text><text x="793" y="438">+07R/08.A2</text><text x="790" y="454">+07R/08.A10</text><text x="793" y="470">+07R/08.A6</text><text x="793" y="519">+07R/08.A2</text><text x="793" y="535">+13/08.B8</text><text x="793" y="543">+13/08.B9</text><text x="793" y="551">+13/08.B8</text>
<text x="790" y="574">+07R/08.A11</text><text x="793" y="582">+07R/08.A9</text><text x="793" y="598">+10/107.A5</text>
<text x="1036" y="560">+13HA40.H11</text>
</g>
<!-- right outgoing wires -->
<g stroke="#0000e6" stroke-width="2.2" fill="none">
<polyline points="1048,636 1075,573 1132,573"/>
<polyline points="1048,637 1075,597 1132,597"/>
<polyline points="1048,653 1075,621 1132,621"/>
<polyline points="1048,670 1075,645 1132,645"/>
<polyline points="1048,685 1075,669 1132,669"/>
<polyline points="1048,686 1132,686"/>
<polyline points="1048,701 1132,701"/>
<polyline points="1048,718 1075,725 1132,725"/>
<polyline points="1048,733 1075,749 1132,749"/>
<polyline points="1048,735 1075,773 1132,773"/>
<polyline points="1048,736 1075,797 1132,797"/>
<polyline points="1048,766 1066,822 1132,822"/>
<polyline points="1048,767 1066,847 1132,847"/>
</g>
<g stroke="#000" fill="#fff" stroke-width="0.8">
<path d="M1132,570 L1140,573 L1132,576 Z"/><path d="M1132,594 L1140,597 L1132,600 Z"/><path d="M1132,618 L1140,621 L1132,624 Z"/><path d="M1132,642 L1140,645 L1132,648 Z"/>
<path d="M1140,666 L1132,669 L1140,672 Z"/><path d="M1140,683 L1132,686 L1140,689 Z"/><path d="M1140,698 L1132,701 L1140,704 Z"/><path d="M1140,722 L1132,725 L1140,728 Z"/><path d="M1140,746 L1132,749 L1140,752 Z"/>
<path d="M1132,770 L1140,773 L1132,776 Z"/><path d="M1132,794 L1140,797 L1132,800 Z"/><path d="M1132,819 L1140,822 L1132,825 Z"/><path d="M1132,844 L1140,847 L1132,850 Z"/>
</g>
<g class="gl" style="font-size:7px">
<text x="1140" y="576">+13HA40.B11</text><text x="1140" y="600">+13HA40.D9</text><text x="1140" y="624">+13HA40.D8</text><text x="1140" y="648">+13HA40.F7</text><text x="1140" y="672">+13HA40.E10</text><text x="1140" y="689">+13HA40.E8</text><text x="1140" y="704">+13HA40.F7</text><text x="1140" y="728">+13HA40.F3</text><text x="1140" y="752">+13HA40.F1</text><text x="1140" y="776">+13HA40.A6</text><text x="1140" y="800">+13HA40.A4</text><text x="1140" y="825">+13HA40.F1</text><text x="1140" y="850">+13HA40.F2</text>
</g>
<g class="bl" style="font-size:3.5px">
<text x="1140" y="569">+UB 888 CR2016.11</text><text x="1140" y="593">+UB 888 CR2016.10</text><text x="1140" y="617">+UB 888 CR2016.9</text><text x="1140" y="641">+UB 888 CR2016.7</text><text x="1140" y="665">GND.151</text><text x="1140" y="682">GND.150</text><text x="1140" y="697">GND.149</text><text x="1140" y="721">GND.148</text><text x="1140" y="745">GND.147</text><text x="1140" y="769">+UB 888 CR2016.6</text><text x="1140" y="793">+UB 888 CR2016.5</text><text x="1140" y="818">+UB 888 CR2016.3</text><text x="1140" y="843">+UB 888 CR2016.4</text>
</g>
<g class="tiny" style="font-size:3.5px">
<text x="1140" y="580">+13G-S16X01</text><text x="1140" y="604">+13G-WA7.5 136.X03</text><text x="1140" y="628">+13G-WA8.5 137.X03</text><text x="1140" y="652">+13G-WA8.5 116.X03</text><text x="1140" y="676">+13G-WA7.5 136.X03</text><text x="1140" y="693">+13G-WA8.5 137.X03</text><text x="1140" y="708">+13G-WA8.5 116.X03</text><text x="1140" y="732">+13G-WA7.5 165.X03</text><text x="1140" y="756">+13G-WA8.5 165.X03</text><text x="1140" y="780">+13G-WA8.5 115.X03</text><text x="1140" y="804">+13G-WA8.5 114.X03</text><text x="1140" y="829">+13G-WA1.5 165.X03</text><text x="1140" y="854">+13G-WA2.5 165.X03</text>
</g>
<text x="1017" y="614" class="k" style="font-size:6px">+13G</text><text x="1017" y="621" class="k" style="font-size:6px">-B74:X10:17</text>
<text x="1071" y="760" class="k" style="font-size:6px">+13G</text><text x="1071" y="767" class="k" style="font-size:6px">-B74:X10:5</text>

<!-- title block -->
<g stroke="#000" fill="none" stroke-width="0.6">
<rect x="611" y="885" width="576" height="32"/>
<line x1="641" y1="885" x2="641" y2="917"/><line x1="658" y1="885" x2="658" y2="917"/><line x1="676" y1="885" x2="676" y2="917"/><line x1="733" y1="885" x2="733" y2="917"/><line x1="755" y1="885" x2="755" y2="917"/>
<line x1="641" y1="893" x2="835" y2="893"/><line x1="641" y1="901" x2="835" y2="901"/><line x1="641" y1="909" x2="835" y2="909"/>
<line x1="835" y1="885" x2="835" y2="917"/><line x1="846" y1="885" x2="846" y2="917"/><line x1="875" y1="885" x2="875" y2="917"/><line x1="918" y1="885" x2="918" y2="917"/>
<line x1="846" y1="897" x2="918" y2="897"/><line x1="835" y1="908" x2="875" y2="908"/>
<line x1="976" y1="885" x2="976" y2="917"/><line x1="1052" y1="885" x2="1052" y2="917"/><line x1="1132" y1="885" x2="1132" y2="917"/>
<line x1="976" y1="901" x2="1132" y2="901"/><line x1="1052" y1="901" x2="1052" y2="917"/>
<line x1="1132" y1="893" x2="1187" y2="893"/><line x1="1132" y1="901" x2="1187" y2="901"/><line x1="1132" y1="909" x2="1187" y2="909"/>
</g>
<g class="tiny" style="font-size:3.5px">
<text x="613" y="893">Zeichnung</text><text x="613" y="898">nur im D*</text><text x="613" y="903">ändern !</text>
<text x="643" y="891">d</text><text x="643" y="899">c</text><text x="643" y="907">b</text><text x="643" y="913">a</text>
<text x="643" y="916">Buchstabe</text><text x="659" y="916">A-Nummer</text><text x="677" y="916">Änderung</text><text x="735" y="916">Datum</text><text x="757" y="916">Name</text>
<text x="849" y="892">Datum</text><text x="877" y="892">Name</text>
<text x="837" y="903">Bearb.</text><text x="849" y="903">08.02.2008</text><text x="877" y="903">Pertl</text><text x="837" y="914">Gepr.</text>
<text x="1134" y="890">Anlage</text><text x="1134" y="898">Ort   -03</text><text x="1134" y="906">Blatt   34</text><text x="1134" y="914">Anzahl  136 BL</text>
</g>
<g class="k" style="font-size:5.5px">
<text x="978" y="893">Type     AHL840D</text><text x="978" y="899">M.-Nr.:  0014-</text><text x="978" y="907">Bestellnummer</text>
<text x="1018" y="893">Bezeichnung:  Stromlaufplan</text><text x="1018" y="899">ab ROPS</text>
<text x="1054" y="908">Zeichnungsnummer</text><text x="1057" y="914">6790200248</text>
</g>
<rect x="923" y="889" width="9" height="9" fill="#d02020"/>
<text x="927.5" y="896.5" text-anchor="middle" style="font-size:7px;fill:#fff;font-weight:bold">T</text>
<text x="935" y="898" style="font-size:10px;font-weight:bold;fill:#333">TEREX</text>
<text x="934" y="913" style="font-size:10px;fill:#555">FUCHS</text>
</svg>

<!-- toolbar -->
<div class="tb">
<svg width="1200" height="32" style="position:absolute;left:0;top:0">
<g fill="#1f3d5c">
<rect x="401" y="10" width="3" height="13"/><path d="M413,10 L405,16.5 L413,23 Z"/>
<path d="M439,10 L431,16.5 L439,23 Z"/>
<path d="M606,10 L614,16.5 L606,23 Z"/>
<path d="M632,10 L640,16.5 L632,23 Z"/><rect x="642" y="10" width="3" height="13"/>
<path d="M585,16 L591,16 L588,20 Z" fill="#444"/>
</g>
<rect x="455.5" y="4.5" width="141" height="23" fill="#fff" stroke="#b0b0b0"/>
<text x="462" y="22" style="font-size:15px;fill:#222;font-family:'Liberation Sans',sans-serif">31 / 136</text>
<g>
<rect x="660" y="7" width="10" height="12" fill="#fff" stroke="#4a6f9a"/><rect x="664" y="12" width="12" height="14" fill="#fff" stroke="#4a6f9a"/><path d="M668,10 L678,10 M674,7 L678,10 L674,13" stroke="#3a9a3a" stroke-width="1.5" fill="none"/>
<rect x="690" y="7" width="12" height="14" fill="#fff" stroke="#bbb"/><rect x="695" y="12" width="12" height="14" fill="#fff" stroke="#bbb"/>
</g>
<rect x="1129" y="3" width="25" height="27" fill="#cde0f5" stroke="#9cbde0"/>
<rect x="1135" y="8" width="12" height="17" fill="#fff" stroke="#6080a0"/><path d="M1137,12h8M1137,15h8M1137,18h8M1137,21h8" stroke="#6080a0"/>
<rect x="1162" y="6" width="11" height="15" fill="#fff" stroke="#6080a0"/><path d="M1164,10h7M1164,13h7M1164,16h7" stroke="#6080a0"/><rect x="1162" y="23" width="11" height="6" fill="#fff" stroke="#6080a0"/>
<rect x="1188" y="6" width="11" height="22" fill="#fff" stroke="#6080a0"/>
</svg>
</div>
</body></html>
